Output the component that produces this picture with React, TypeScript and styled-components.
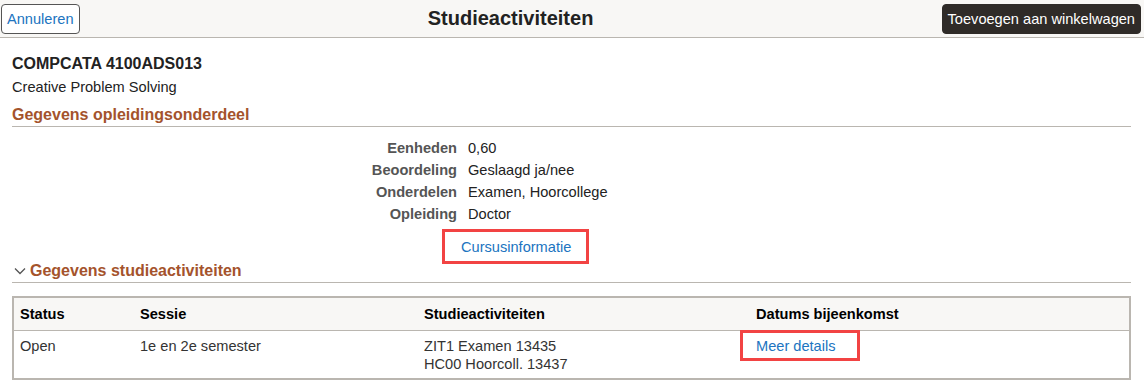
import React from 'react';
import styled, { createGlobalStyle } from 'styled-components';

const GlobalStyle = createGlobalStyle`
  html, body {
    margin: 0;
    padding: 0;
    background: #fff;
  }
  body {
    font-family: "Liberation Sans", Arial, sans-serif;
    font-size: 14.6px;
    color: #333;
  }
`;

const Header = styled.header`
  display: flex;
  align-items: center;
  height: 37px;
  padding: 0 3px 0 1px;
  background: #f8f7f5;
  border-bottom: 1px solid #bab6b0;
`;

const Button = styled.button<{ $primary?: boolean }>`
  height: 30px;
  padding: 0 5px;
  border-radius: 4px;
  font-family: inherit;
  font-size: 14.6px;
  cursor: pointer;
  border: 1px solid ${(p) => (p.$primary ? '#2f2b28' : '#555')};
  background: ${(p) => (p.$primary ? '#2f2b28' : '#fff')};
  color: ${(p) => (p.$primary ? '#fff' : '#2074c0')};
`;

const Title = styled.h1`
  flex: 1;
  margin: 0;
  text-align: center;
  font-size: 20px;
  font-weight: 700;
  color: #222;
`;

const Content = styled.main`
  padding: 16px 13px 0 12px;
`;

const CourseCode = styled.div`
  font-size: 16px;
  font-weight: 700;
  line-height: 20px;
  color: #222;
`;

const CourseName = styled.div`
  margin-top: 3px;
  line-height: 20px;
  color: #222;
`;

const SectionTitle = styled.h2<{ $top: number }>`
  display: flex;
  align-items: center;
  gap: 4px;
  margin: ${(p) => p.$top}px 0 0;
  padding-bottom: 1px;
  line-height: 20px;
  font-size: 16px;
  font-weight: 700;
  color: #a4532c;
  border-bottom: 1px solid #bab6b0;
`;

const Chevron = styled.svg`
  margin-left: 2px;
  flex: none;
`;

const Fields = styled.dl`
  display: grid;
  grid-template-columns: 445px auto;
  column-gap: 11px;
  margin: 10px 0 0;
  line-height: 22px;
`;

const Label = styled.dt`
  text-align: right;
  font-weight: 700;
  color: #555;
`;

const Value = styled.dd`
  margin: 0;
  color: #222;
`;

const LinkRow = styled.div`
  padding: 12px 0 4px 449px;
  line-height: 20px;
`;

// red annotation frame drawn over a link
const Link = styled.a<{ $box: [number, number, number, number] }>`
  position: relative;
  color: #2074c0;
  text-decoration: none;
  cursor: pointer;

  &::after {
    content: '';
    position: absolute;
    top: ${(p) => p.$box[0]}px;
    right: ${(p) => p.$box[1]}px;
    bottom: ${(p) => p.$box[2]}px;
    left: ${(p) => p.$box[3]}px;
    border: 3px solid #f24343;
    pointer-events: none;
  }
`;

const Table = styled.div`
  margin-top: 13px;
  border: 2px solid #bab6b0;
`;

const Row = styled.div<{ $head?: boolean }>`
  display: grid;
  grid-template-columns: 120px 284px 332px 1fr;
  background: ${(p) => (p.$head ? '#f8f7f5' : '#fff')};
  border-bottom: ${(p) => (p.$head ? '1px solid #bab6b0' : 'none')};
  min-height: ${(p) => (p.$head ? 32 : 47)}px;
  align-items: ${(p) => (p.$head ? 'center' : 'start')};
`;

const Cell = styled.div<{ $head?: boolean }>`
  padding: ${(p) => (p.$head ? '0 6px' : '6px 6px 3px')};
  line-height: 18px;
  font-weight: ${(p) => (p.$head ? 700 : 400)};
  color: ${(p) => (p.$head ? '#000' : '#333')};
`;

const fields = [
  ['Eenheden', '0,60'],
  ['Beoordeling', 'Geslaagd ja/nee'],
  ['Onderdelen', 'Examen, Hoorcollege'],
  ['Opleiding', 'Doctor'],
];

export default function App() {
  return (
    <>
      <GlobalStyle />
      <Header>
        <Button>Annuleren</Button>
        <Title>Studieactiviteiten</Title>
        <Button $primary>Toevoegen aan winkelwagen</Button>
      </Header>
      <Content>
        <CourseCode>COMPCATA 4100ADS013</CourseCode>
        <CourseName>Creative Problem Solving</CourseName>

        <SectionTitle $top={8}>Gegevens opleidingsonderdeel</SectionTitle>
        <Fields>
          {fields.map(([label, value]) => (
            <React.Fragment key={label}>
              <Label>{label}</Label>
              <Value>{value}</Value>
            </React.Fragment>
          ))}
        </Fields>
        <LinkRow>
          <Link $box={[-10, -18, -9, -19]}>Cursusinformatie</Link>
        </LinkRow>

        <SectionTitle $top={0}>
          <Chevron width="12" height="8" viewBox="0 0 12 8">
            <polyline points="1,1.5 6,6.5 11,1.5" fill="none" stroke="#555" strokeWidth="1.3" />
          </Chevron>
          Gegevens studieactiviteiten
        </SectionTitle>

        <Table>
          <Row $head>
            <Cell $head>Status</Cell>
            <Cell $head>Sessie</Cell>
            <Cell $head>Studieactiviteiten</Cell>
            <Cell $head>Datums bijeenkomst</Cell>
          </Row>
          <Row>
            <Cell>Open</Cell>
            <Cell>1e en 2e semester</Cell>
            <Cell>
              ZIT1 Examen 13435
              <br />
              HC00 Hoorcoll. 13437
            </Cell>
            <Cell>
              <Link $box={[-8, -24, -7, -16]}>Meer details</Link>
            </Cell>
          </Row>
        </Table>
      </Content>
    </>
  );
}
